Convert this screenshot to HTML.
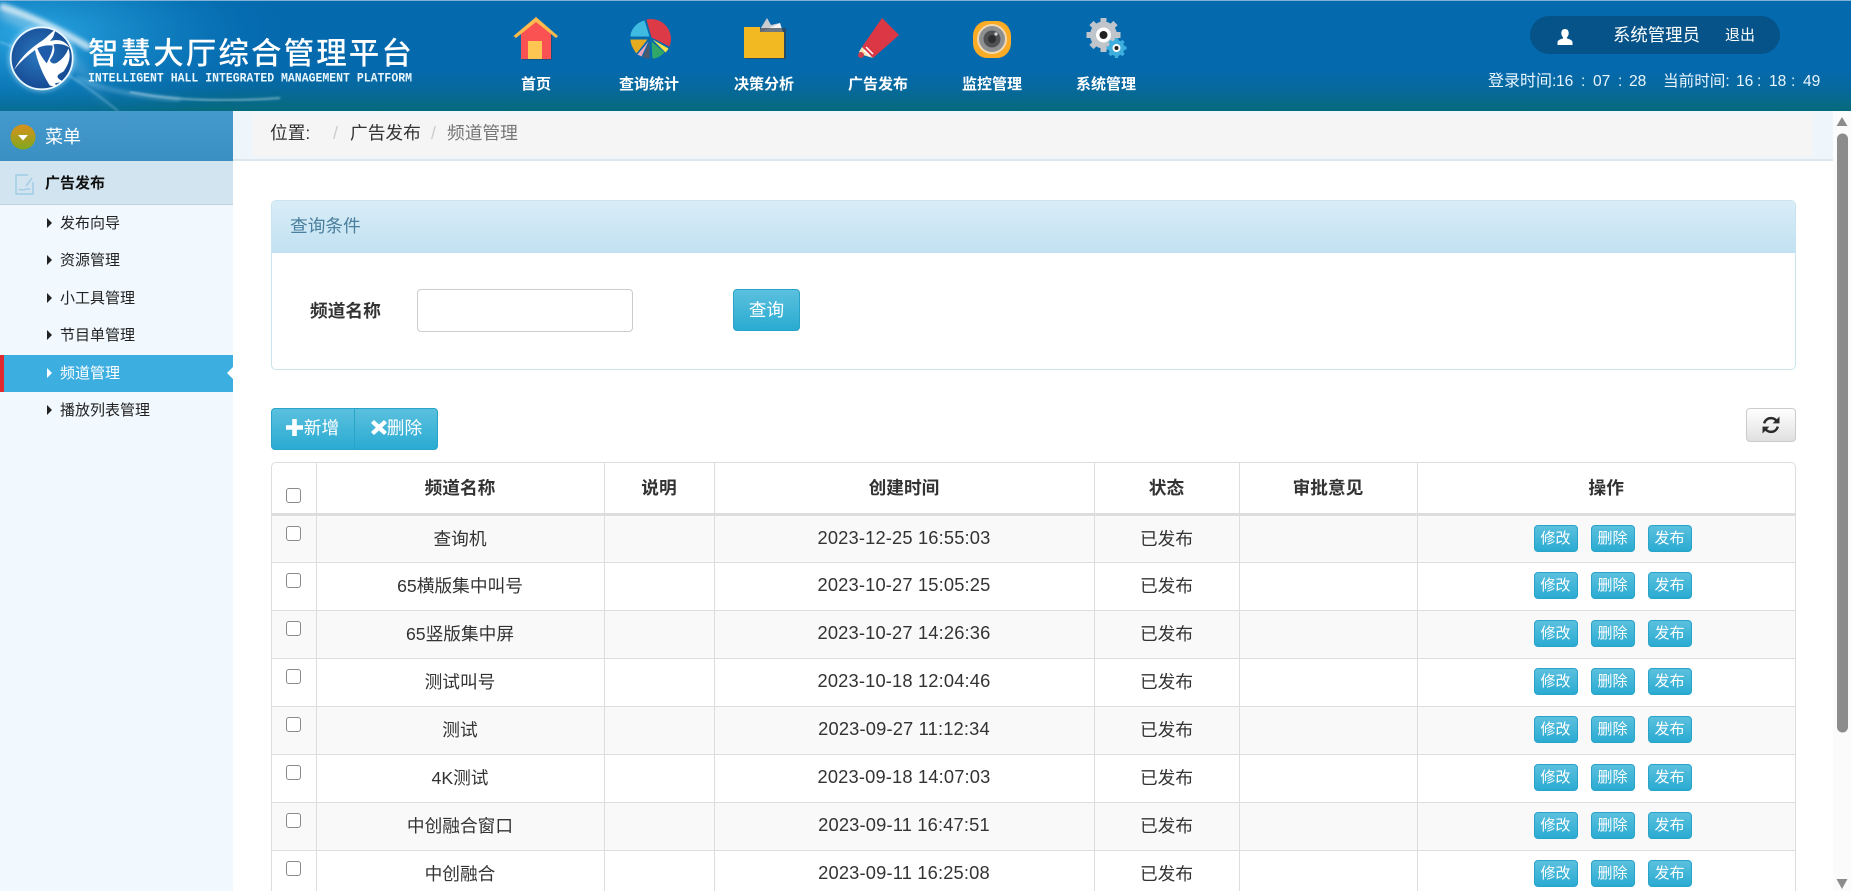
<!DOCTYPE html>
<html lang="zh-CN"><head><meta charset="utf-8"><title>频道管理</title>
<style>
*{box-sizing:border-box}
html,body{margin:0;padding:0;width:1851px;height:891px;overflow:hidden;background:#fff;font-family:"Liberation Sans","Noto Sans CJK SC",sans-serif;color:#333}
#root{position:absolute;left:0;top:0;width:1851px;height:891px;overflow:hidden;background:#fff}
.a{position:absolute}
#hd{left:0;top:0;width:1851px;height:111px;background:linear-gradient(#0569ae 0,#0569ae 62%,#06699f 78%,#066a7c 100%);border-top:1px solid #7fb2d6;overflow:hidden}
.nav{position:absolute;top:74px;width:114px;text-align:center;color:#fff;font-size:15px;font-weight:700;line-height:20px}
#side{left:0;top:111px;width:233px;height:780px;background:#f1f8fe}
#menu{left:0;top:0;width:233px;height:50px;background:linear-gradient(#4499cd,#3a8fc3);color:#fff;font-size:18px;line-height:52px;padding-left:45px}
#grp{left:0;top:50px;width:233px;height:44px;background:#d2e4ef;border-bottom:1px solid #bdd0dc;font-size:15px;font-weight:700;color:#111;line-height:45px;padding-left:45px}
.it{position:absolute;left:0;width:233px;height:37px;line-height:38px;font-size:15px;padding-left:60px;color:#222}
.it:before{content:"";position:absolute;left:47px;top:13px;border-left:5px solid #222;border-top:5px solid transparent;border-bottom:5px solid transparent}
.it.on{background:#3daee0;color:#fff;border-left:4px solid #e0282e;padding-left:56px}
.it.on:before{left:43px;border-left-color:#fff}
.it.on:after{content:"";position:absolute;right:0;top:12px;border-right:6px solid #fff;border-top:6px solid transparent;border-bottom:6px solid transparent}
#bc{left:233px;top:111px;width:1600px;height:50px;background:#eef5fb;border-bottom:2px solid #dfe7ee}
#bci{left:20px;top:2px;width:1560px;height:43px;background:#f5f5f5}
.bt{font-size:17.7px;line-height:24px;top:10px;position:absolute;white-space:nowrap}
#sb{left:1833px;top:111px;width:18px;height:780px;background:#fbfbfb}
#pn{left:271px;top:200px;width:1525px;height:170px;border:1px solid #c9e4ee;border-radius:5px;overflow:hidden;background:#fff}
#ph{left:0;top:0;width:100%;height:52px;background:linear-gradient(#d9edf7,#c1e1f2);color:#4a7f9e;font-size:17.7px;line-height:50px;padding-left:18px}
.btn{position:absolute;background:linear-gradient(#5bc0de,#2aabd2);border:1px solid #28a4c9;color:#fff;text-align:center;border-radius:4px}
#tw{left:271px;top:462px;width:1525px;height:429px;border:1px solid #ddd;border-bottom:0;border-radius:5px 5px 0 0;overflow:hidden}
table{border-collapse:collapse;table-layout:fixed;width:1523px;font-size:17.7px;text-align:center}
td,th{border:1px solid #ddd;padding:0;vertical-align:middle}
tr>*:first-child{border-left:0}tr>*:last-child{border-right:0}
th{height:51px;border-top:0;border-bottom:3px solid #ddd;color:#333;font-weight:700;padding-bottom:2px}
td{height:48px;color:#333;padding-bottom:2px}
td.o{padding-bottom:0}
td.d{font-size:18.3px;letter-spacing:.17px}
tbody tr:nth-child(odd){background:#f9f9f9}
td:first-child,th:first-child{vertical-align:top;text-align:left}
input[type=checkbox]{appearance:none;-webkit-appearance:none;display:block;width:15px;height:15px;margin:10px 0 0 14px;border:1.5px solid #8a8a8a;border-radius:3px;background:#fff}
th input[type=checkbox]{margin-top:25px}
.ops{position:relative;height:46px}
.s{top:9px;width:44px;height:27px;font-size:15px;line-height:25px}
.s1{left:116px}.s2{left:173px}.s3{left:230px}
.t{position:absolute;top:71px;font-size:15.6px;line-height:20px;color:#e9f6ff;white-space:nowrap}
</style></head><body><div id="root">

<div id="hd" class="a">
<svg class="a" style="left:0;top:-1px" width="520" height="111" viewBox="0 0 520 111">
<defs>
<radialGradient id="gl" cx="0.1" cy="0.3" r="0.9"><stop offset="0" stop-color="#2aa6e2"/><stop offset="0.55" stop-color="#0f7fc0" stop-opacity=".75"/><stop offset="1" stop-color="#0569ae" stop-opacity="0"/></radialGradient>
<radialGradient id="ball" cx="0.45" cy="0.45" r="0.6"><stop offset="0" stop-color="#2a78bf"/><stop offset="1" stop-color="#14468f"/></radialGradient>
<linearGradient id="st" x1="0" x2="1"><stop offset="0" stop-color="#fff" stop-opacity=".85"/><stop offset=".6" stop-color="#bfe9ff" stop-opacity=".6"/><stop offset="1" stop-color="#fff" stop-opacity="0"/></linearGradient>
<filter id="b1"><feGaussianBlur stdDeviation="2.2"/></filter>
<filter id="b2"><feGaussianBlur stdDeviation="1"/></filter>
<filter id="b3"><feGaussianBlur stdDeviation="5"/></filter>
</defs>
<rect width="300" height="111" fill="url(#gl)"/>
<path d="M0 12C40 28 75 52 110 110" stroke="url(#st)" stroke-width="7" fill="none" filter="url(#b3)" opacity=".7"/>
<path d="M0 6C30 16 60 30 90 48" stroke="#fff" stroke-opacity=".7" stroke-width="7" fill="none" filter="url(#b1)"/>
<path d="M0 42C30 52 70 72 118 111" stroke="#bfe9ff" stroke-opacity=".4" stroke-width="1.5" fill="none" filter="url(#b2)"/>
<path d="M76 78C110 92 140 96 180 100" stroke="#bfe9ff" stroke-opacity=".45" stroke-width="2.500" fill="none" filter="url(#b1)"/>
<path d="M130 92C175 101 225 102 280 98" stroke="#e6f7ff" stroke-opacity=".6" stroke-width="1.500" fill="none" filter="url(#b2)"/>
<circle cx="41.7" cy="58.3" r="33.500" fill="#cdeeff" fill-opacity=".45" filter="url(#b1)"/>
<circle cx="41.7" cy="58.3" r="31" fill="url(#ball)" stroke="#eaf8ff" stroke-width="1.800"/>
<g transform="translate(0 15) scale(.3333)">
<path d="M42 165C60 130 85 105 125 78C140 68 150 55 168 42C160 60 165 62 150 78C175 72 195 75 210 100C200 90 180 85 160 88C165 100 165 115 150 135C150 145 165 150 175 140C190 130 200 115 205 100C215 125 205 150 190 170C175 178 160 185 190 200L165 205L170 215L150 212C135 190 115 150 105 105C85 120 60 140 42 165Z" fill="#fff"/>
<path d="M112 100C125 92 145 90 158 92C158 110 150 125 140 145C128 130 118 115 112 100Z" fill="#1e5ba8"/>
</g>
<text x="88" y="64" fill="#fff" font-size="30.5" letter-spacing="2.1" font-family="'Noto Sans CJK SC',sans-serif" font-weight="500">智慧大厅综合管理平台</text>
<text x="88" y="81.500" fill="#e8f6ff" font-size="12.500" font-weight="700" font-family="'Liberation Mono',monospace" textLength="324" lengthAdjust="spacingAndGlyphs">INTELLIGENT HALL INTEGRATED MANAGEMENT PLATFORM</text>
</svg>

<svg class="a" style="left:500px;top:-1px" width="660" height="70" viewBox="500 0 660 70">
<!-- home -->
<rect x="521" y="31" width="30" height="28" fill="#2a3b55" opacity=".5" transform="translate(1 1)"/>
<path d="M521 31L536 20L551 31V59H521Z" fill="#fa5252"/>
<rect x="528" y="41" width="14" height="18" fill="#fdc652"/>
<path d="M513.5 36L536 17L558 36L556 38L536 22L516 38Z" fill="#fdba4d"/>
<!-- pie -->
<g transform="translate(650.5 38.5)">
<path d="M-4 -19A20 20 0 0 1 19 8L1 -1Z" fill="#dd3a47"/>
<path d="M-6 -18L-1 -2L-20 -2C-20 -9 -14 -16 -6 -18Z" fill="#3fbbe2"/>
<path d="M-20 1L-3 1L-14 15C-17 11 -20 6 -20 1Z" fill="#e6ab1f"/>
<path d="M-2 3L-9 18L-13 16Z" fill="#eba5bc"/>
<path d="M-1 3L-1 20C-4 20 -6 19 -8 19Z" fill="#4a5a6a"/>
<path d="M1 3L14 14C10 18 6 20 2 20Z" fill="#32a868"/>
<path d="M2 1L18 10C17 12 16 13 15 14Z" fill="#f0e14a"/>
</g>
<!-- folder -->
<path d="M759 31L767 18L771 25L780 23L782 32H758Z" fill="#c9ccd0"/>
<path d="M759 33L780 23L783 32Z" fill="#f4f4f4"/>
<rect x="745" y="28" width="41" height="31" fill="#34404c" opacity=".7"/>
<path d="M744 27H760V32H784V58H744Z" fill="#f2b922"/>
<!-- pencil -->
<path d="M882 18L899 35L873 58L862 47Z" fill="#db3744"/>
<path d="M862 47L873 58L863 55L859 52Z" fill="#f6e4b5"/>
<circle cx="861" cy="55" r="3" fill="#c9404b"/>
<path d="M864 50L870 56M866 47L873 54" stroke="#fff" stroke-width="1.5"/>
<!-- camera -->
<rect x="973" y="21" width="38" height="37" rx="14" ry="15" fill="#fcab25"/>
<circle cx="992" cy="39" r="15" fill="#f0d9b0"/>
<circle cx="992" cy="39" r="13" fill="#8d8f91"/>
<circle cx="992" cy="39" r="8.5" fill="#4f5152"/>
<circle cx="992" cy="39" r="4" fill="#2d2e2f"/>
<circle cx="996" cy="34" r="1.6" fill="#d9d9d9"/>
<!-- gears -->
<g fill="#bfc5cb"><circle cx="1103.5" cy="35" r="13.5"/>
<g stroke="#bfc5cb" stroke-width="6"><path d="M1103.5 18V52M1086.5 35H1120.5M1091.5 23L1115.5 47M1115.5 23L1091.5 47"/></g></g>
<circle cx="1103.5" cy="35" r="7.5" fill="#fff"/><circle cx="1103.5" cy="35" r="4" fill="#222"/>
<g fill="#3eaedd"><circle cx="1116.5" cy="48" r="8"/><g stroke="#3eaedd" stroke-width="3.5"><path d="M1116.5 38V58M1106.5 48H1126.5M1109.5 41L1123.5 55M1123.5 41L1109.5 55"/></g></g>
<circle cx="1116.5" cy="48" r="4" fill="#fff"/><circle cx="1116.5" cy="48" r="2" fill="#222"/>
</svg>

<div class="nav" style="left:479px">首页</div>
<div class="nav" style="left:592px">查询统计</div>
<div class="nav" style="left:707px">决策分析</div>
<div class="nav" style="left:821px">广告发布</div>
<div class="nav" style="left:935px">监控管理</div>
<div class="nav" style="left:1049px">系统管理</div>

<div class="a" style="left:1530px;top:15px;width:250px;height:38px;border-radius:19px;background:#055389"></div>
<svg class="a" style="left:1557px;top:28px" width="16" height="16" viewBox="0 0 16 16"><path d="M8 0C5.6 0 4.3 1.8 4.3 4C4.3 6 5 7.4 6 8.2V9.5C3.5 10.2 0.5 11 .5 13.5V16H15.5V13.5C15.5 11 12.5 10.2 10 9.5V8.2C11 7.4 11.7 6 11.7 4C11.7 1.8 10.4 0 8 0Z" fill="#fff"/></svg>
<div class="a" style="left:1613px;top:22px;font-size:17.4px;line-height:24px;color:#fff;white-space:nowrap">系统管理员</div>
<div class="a" style="left:1725px;top:24px;font-size:15px;line-height:22px;color:#fff;white-space:nowrap">退出</div>
<span class="t" style="left:1488px;font-size:16px">登录时间:</span>
<span class="t" style="left:1556px">16</span><span class="t" style="left:1581px">:</span>
<span class="t" style="left:1593px">07</span><span class="t" style="left:1618px">:</span>
<span class="t" style="left:1629px">28</span>
<span class="t" style="left:1663px;font-size:15.600px">当前时间:</span>
<span class="t" style="left:1736px">16</span><span class="t" style="left:1757px">:</span>
<span class="t" style="left:1769px">18</span><span class="t" style="left:1791px">:</span>
<span class="t" style="left:1803px">49</span>
</div>

<div id="side" class="a">
<div id="menu" class="a">菜单</div>
<svg class="a" style="left:10px;top:13px" width="26" height="26" viewBox="0 0 26 26"><defs><linearGradient id="cg" x1="0" y1="0" x2="0" y2="1"><stop offset="0" stop-color="#d9901c"/><stop offset="1" stop-color="#7fa81e"/></linearGradient></defs><circle cx="13" cy="13" r="12.5" fill="url(#cg)"/><path d="M8 11H18L13 16.5Z" fill="#fff"/></svg>
<div id="grp" class="a">广告发布</div>
<svg class="a" style="left:15px;top:63px" width="19" height="21" viewBox="0 0 19 21" fill="none" stroke="#9fcbe6" stroke-width="1.4"><path d="M13 1H1V20H18V8"/><path d="M17 4L11 12"/><path d="M4 16C6 14.5 8 17 10 15.5S13 16 15 15"/></svg>
<div class="it" style="top:94px">发布向导</div>
<div class="it" style="top:131px">资源管理</div>
<div class="it" style="top:169px">小工具管理</div>
<div class="it" style="top:206px">节目单管理</div>
<div class="it on" style="top:244px">频道管理</div>
<div class="it" style="top:281px">播放列表管理</div>
</div>

<div id="bc" class="a">
<div id="bci" class="a"></div>
<div class="bt" style="left:37px;color:#333">位置:</div>
<div class="bt" style="left:100px;color:#ccc">/</div>
<div class="bt" style="left:117px;color:#333">广告发布</div>
<div class="bt" style="left:198px;color:#ccc">/</div>
<div class="bt" style="left:214px;color:#777">频道管理</div>
</div>

<div id="pn" class="a"><div id="ph" class="a">查询条件</div></div>
<div class="a" style="left:310px;top:298px;font-size:17.7px;font-weight:700;line-height:26px;color:#333">频道名称</div>
<div class="a" style="left:417px;top:289px;width:216px;height:43px;border:1px solid #ccc;border-radius:4px;background:#fff"></div>
<div class="btn" style="left:733px;top:289px;width:67px;height:42px;font-size:17.7px;line-height:40px">查询</div>

<div class="btn" style="left:271px;top:408px;width:84px;height:42px;border-radius:4px 0 0 4px;font-size:17.7px;line-height:38px;padding-left:17px">新增</div>
<div class="btn" style="left:354px;top:408px;width:84px;height:42px;border-radius:0 4px 4px 0;font-size:17.7px;line-height:38px;padding-left:17px">删除</div>
<svg class="a" style="left:286px;top:419px" width="17" height="17" viewBox="0 0 17 17"><path d="M6.2 0H10.8V6.2H17V10.8H10.8V17H6.2V10.8H0V6.2H6.2Z" fill="#fff"/></svg>
<svg class="a" style="left:371px;top:420px" width="16" height="15" viewBox="0 0 16 15"><path d="M3 0L8 4.5L13 0L16 3L11.200 7.500L16 12L13 15L8 10.500L3 15L0 12L4.800 7.500L0 3Z" fill="#fff"/></svg>

<div class="a" style="left:1746px;top:408px;width:50px;height:34px;border:1px solid #ccc;border-radius:4px;background:linear-gradient(#fff,#e0e0e0)"></div>
<svg class="a" style="left:1762px;top:416px" width="18" height="18" viewBox="0 0 17 17" fill="none" stroke="#2a2a2a" stroke-width="2.300"><path d="M2 7C3 3.800 5.500 2 8.500 2C10.800 2 12.800 3.200 14 5"/><path d="M15 10C14 13.200 11.500 15 8.500 15C6.200 15 4.200 13.800 3 12"/><path d="M16.500 .5V7H10Z" fill="#2a2a2a" stroke="none"/><path d="M.5 16.500V10H7Z" fill="#2a2a2a" stroke="none"/></svg>

<div id="tw" class="a">
<table>
<colgroup><col style="width:44px"><col style="width:288px"><col style="width:110px"><col style="width:380px"><col style="width:145px"><col style="width:178px"><col></colgroup>
<thead><tr><th><input type="checkbox"></th><th>频道名称</th><th>说明</th><th>创建时间</th><th>状态</th><th>审批意见</th><th>操作</th></tr></thead>
<tbody>
<tr><td><input type="checkbox"></td><td>查询机</td><td></td><td class="d">2023-12-25 16:55:03</td><td>已发布</td><td></td><td class="o"><div class="ops"><div class="btn s s1">修改</div><div class="btn s s2">删除</div><div class="btn s s3">发布</div></div></td></tr>
<tr><td><input type="checkbox"></td><td>65横版集中叫号</td><td></td><td class="d">2023-10-27 15:05:25</td><td>已发布</td><td></td><td class="o"><div class="ops"><div class="btn s s1">修改</div><div class="btn s s2">删除</div><div class="btn s s3">发布</div></div></td></tr>
<tr><td><input type="checkbox"></td><td>65竖版集中屏</td><td></td><td class="d">2023-10-27 14:26:36</td><td>已发布</td><td></td><td class="o"><div class="ops"><div class="btn s s1">修改</div><div class="btn s s2">删除</div><div class="btn s s3">发布</div></div></td></tr>
<tr><td><input type="checkbox"></td><td>测试叫号</td><td></td><td class="d">2023-10-18 12:04:46</td><td>已发布</td><td></td><td class="o"><div class="ops"><div class="btn s s1">修改</div><div class="btn s s2">删除</div><div class="btn s s3">发布</div></div></td></tr>
<tr><td><input type="checkbox"></td><td>测试</td><td></td><td class="d">2023-09-27 11:12:34</td><td>已发布</td><td></td><td class="o"><div class="ops"><div class="btn s s1">修改</div><div class="btn s s2">删除</div><div class="btn s s3">发布</div></div></td></tr>
<tr><td><input type="checkbox"></td><td>4K测试</td><td></td><td class="d">2023-09-18 14:07:03</td><td>已发布</td><td></td><td class="o"><div class="ops"><div class="btn s s1">修改</div><div class="btn s s2">删除</div><div class="btn s s3">发布</div></div></td></tr>
<tr><td><input type="checkbox"></td><td>中创融合窗口</td><td></td><td class="d">2023-09-11 16:47:51</td><td>已发布</td><td></td><td class="o"><div class="ops"><div class="btn s s1">修改</div><div class="btn s s2">删除</div><div class="btn s s3">发布</div></div></td></tr>
<tr><td><input type="checkbox"></td><td>中创融合</td><td></td><td class="d">2023-09-11 16:25:08</td><td>已发布</td><td></td><td class="o"><div class="ops"><div class="btn s s1">修改</div><div class="btn s s2">删除</div><div class="btn s s3">发布</div></div></td></tr>
</tbody></table>
</div>

<div id="sb" class="a"></div>
<svg class="a" style="left:1833px;top:111px" width="18" height="780" viewBox="0 0 18 780">
<path d="M9 6L14.500 15H3.500Z" fill="#8c8c8c"/>
<path d="M4 28A5.500 5.500 0 0 1 15 28V616A5.500 5.500 0 0 1 4 616Z" fill="#8c8c8c"/>
<path d="M9 778L14.500 768H3.500Z" fill="#8c8c8c"/>
</svg>
</div></body></html>
